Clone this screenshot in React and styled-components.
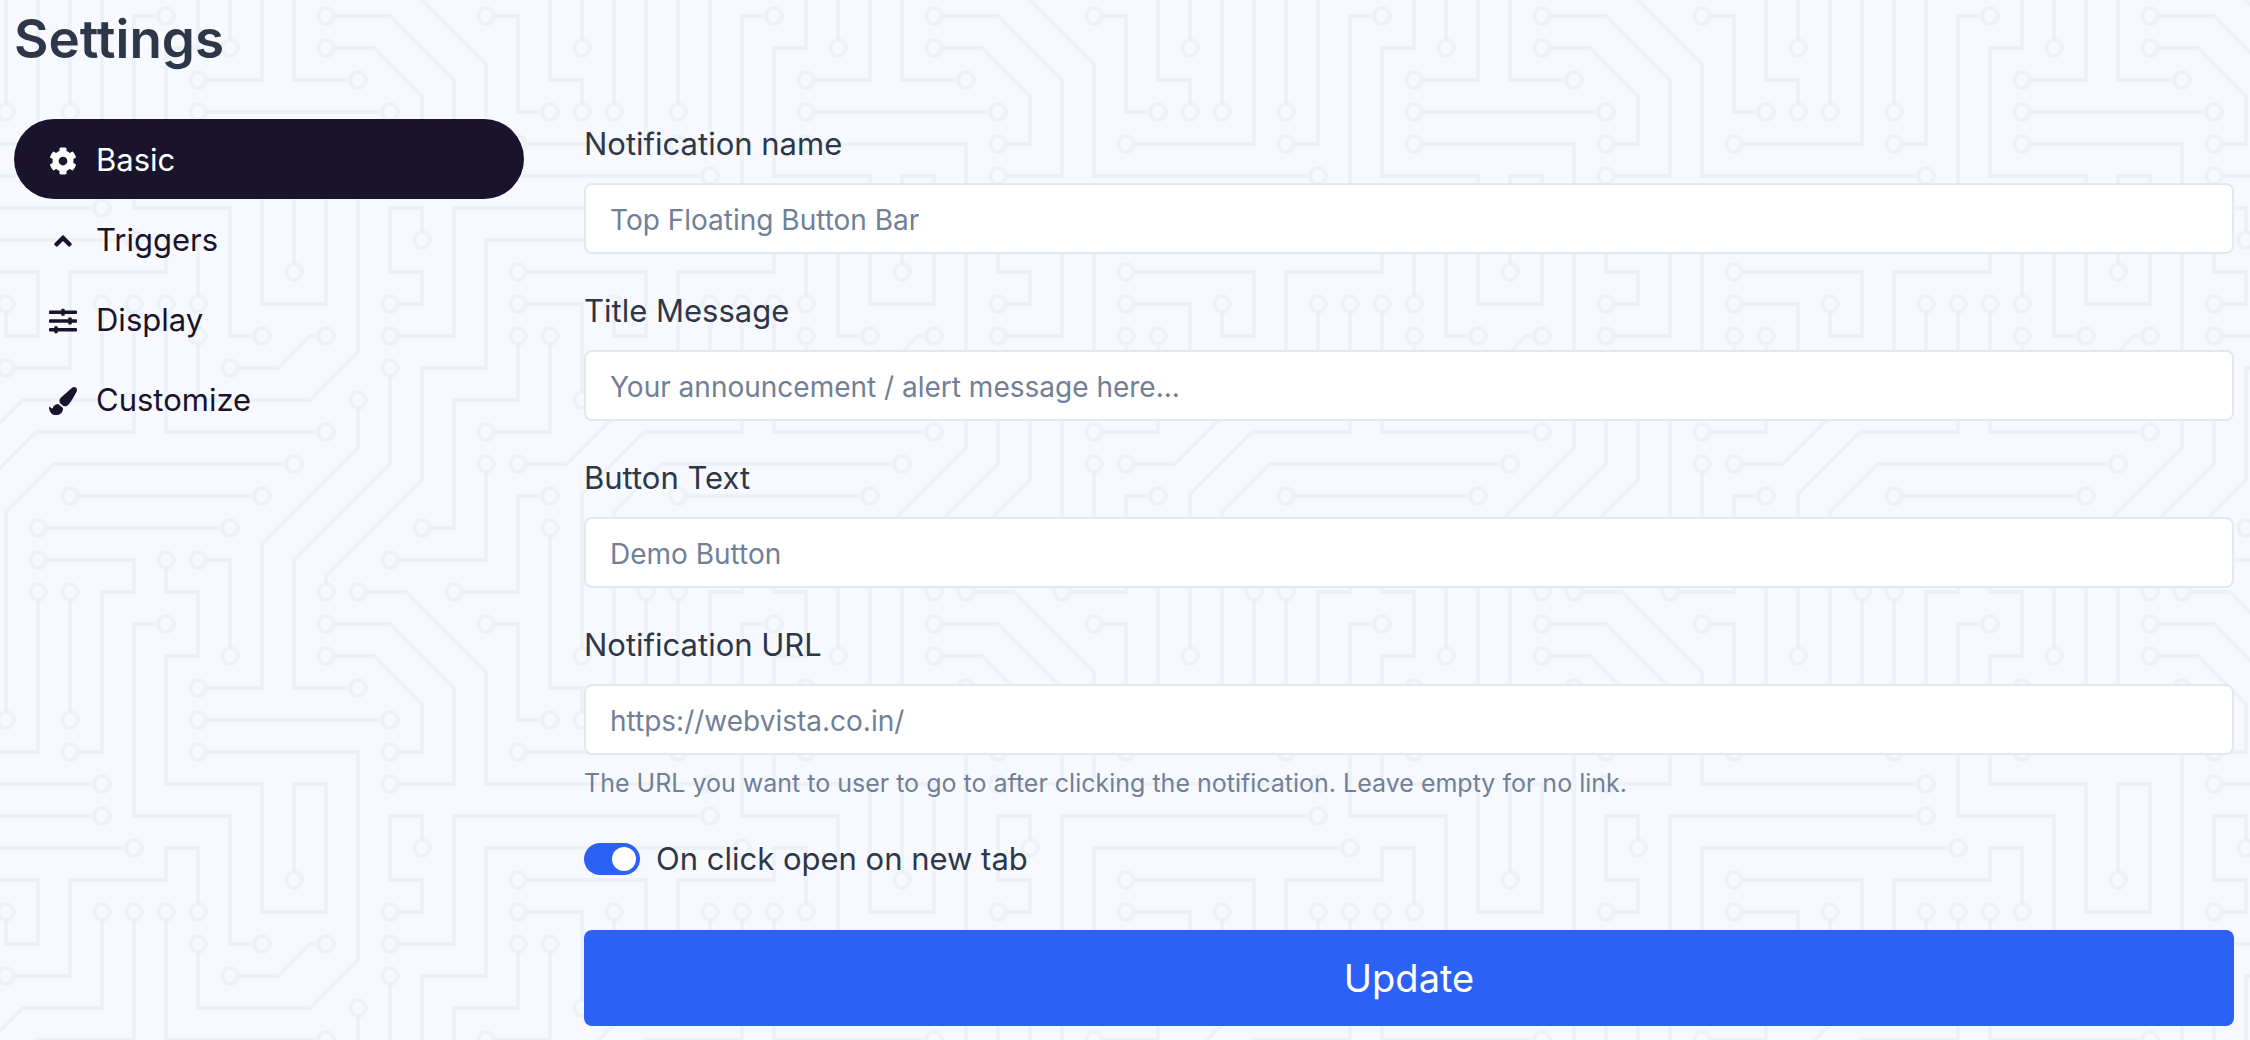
import React, { useState } from 'react';
import {
  FaAngleUp, FaCog, FaPaintBrush, FaSlidersH,
} from 'react-icons/fa';
import styled, { createGlobalStyle } from 'styled-components';

const traces = 'M44.1 224a5 5 0 1 1 0 2H0v-2h44.1zm160 48a5 5 0 1 1 0 2H82v-2h122.1zm57.8-46a5 5 0 1 1 0-2H304v2h-42.1zm0 16a5 5 0 1 1 0-2H304v2h-42.1zm6.2-114a5 5 0 1 1 0 2h-86.2a5 5 0 1 1 0-2h86.2zm-256-48a5 5 0 1 1 0 2H0v-2h12.1zm185.8 34a5 5 0 1 1 0-2h86.2a5 5 0 1 1 0 2h-86.2zM258 12.1a5 5 0 1 1-2 0V0h2v12.1zm-64 208a5 5 0 1 1-2 0v-54.2a5 5 0 1 1 2 0v54.2zm48-198.2V80h62v2h-64V21.9a5 5 0 1 1 2 0zm16 16V64h46v2h-48V37.9a5 5 0 1 1 2 0zm-128 96V208h16v12.1a5 5 0 1 1-2 0V210h-16v-76.1a5 5 0 1 1 2 0zm-5.9-21.9a5 5 0 1 1 0 2H114v48H85.9a5 5 0 1 1 0-2H112v-48h12.1zm-6.2 130a5 5 0 1 1 0-2H176v-74.1a5 5 0 1 1 2 0V242h-60.1zm-16-64a5 5 0 1 1 0-2H114v48h10.1a5 5 0 1 1 0 2H112v-48h-10.1zM66 284.1a5 5 0 1 1-2 0V274H50v30h-2v-32h18v12.1zM236.1 176a5 5 0 1 1 0 2H226v94h48v32h-2v-30h-48v-98h12.1zm25.8-30a5 5 0 1 1 0-2H274v44.1a5 5 0 1 1-2 0V146h-10.1zm-64 96a5 5 0 1 1 0-2H208v-80h16v-14h-42.1a5 5 0 1 1 0-2H226v18h-16v80h-12.1zm86.2-210a5 5 0 1 1 0 2H272V0h2v32h10.1zM98 101.9V146H53.9a5 5 0 1 1 0-2H96v-42.1a5 5 0 1 1 2 0zM53.9 34a5 5 0 1 1 0-2H80V0h2v34H53.9zm60.1 3.9V66H82v64H69.9a5 5 0 1 1 0-2H80V64h32V37.9a5 5 0 1 1 2 0zM101.9 82a5 5 0 1 1 0-2H128V37.9a5 5 0 1 1 2 0V82h-28.1zm16-64a5 5 0 1 1 0-2H146v44.1a5 5 0 1 1-2 0V18h-26.1zm102.2 270a5 5 0 1 1 0 2H98v14h-2v-16h124.1zM242 149.9V160h16v34h-16v62h48v48h-2v-46h-48v-66h16v-30h-16v-12.1a5 5 0 1 1 2 0zM53.9 18a5 5 0 1 1 0-2H64V2H48V0h18v18H53.9zm112 32a5 5 0 1 1 0-2H192V0h50v2h-48v48h-28.1zm-48-48a5 5 0 0 1-9.8-2h2.07a3 3 0 1 0 5.66 0H178v34h-18V21.9a5 5 0 1 1 2 0V32h14V2h-58.1zm0 96a5 5 0 1 1 0-2H137l32-32h39V21.9a5 5 0 1 1 2 0V66h-40.17l-32 32H117.9zm28.1 90.1a5 5 0 1 1-2 0v-76.51L175.59 80H224V21.9a5 5 0 1 1 2 0V82h-49.59L146 112.41v75.69zm16 32a5 5 0 1 1-2 0v-99.51L184.59 96H300.1a5 5 0 0 1 3.9-3.9v2.07a3 3 0 0 0 0 5.66v2.07a5 5 0 0 1-3.9-3.9H185.41L162 121.41v98.69zm-144-64a5 5 0 1 1-2 0v-3.51l48-48V48h32V0h2v50H66v55.41l-48 48v2.69zM50 53.9v43.51l-48 48V208h26.1a5 5 0 1 1 0 2H0v-65.41l48-48V53.9a5 5 0 1 1 2 0zm-16 16V89.41l-34 34v-2.82l32-32V69.9a5 5 0 1 1 2 0zM12.1 32a5 5 0 1 1 0 2H9.41L0 43.41V40.6L8.59 32h3.51zm265.8 18a5 5 0 1 1 0-2h18.69l7.41-7.41v2.82L297.41 50H277.9zm-16 160a5 5 0 1 1 0-2H288v-71.41l16-16v2.82l-14 14V210h-28.1zm-208 32a5 5 0 1 1 0-2H64v-22.59L40.59 194H21.9a5 5 0 1 1 0-2H41.41L66 216.59V242H53.9zm150.2 14a5 5 0 1 1 0 2H96v-56.6L56.6 162H37.9a5 5 0 1 1 0-2h19.5L98 200.6V256h106.1zm-150.2 2a5 5 0 1 1 0-2H80v-46.59L48.59 178H21.9a5 5 0 1 1 0-2H49.41L82 208.59V258H53.9zM34 39.8v1.61L9.41 66H0v-2h8.59L32 40.59V0h2v39.8zM2 300.1a5 5 0 0 1 3.9 3.9H3.83A3 3 0 0 0 0 302.17V256h18v48h-2v-46H2v42.1zM34 241v63h-2v-62H0v-2h34v1zM17 18H0v-2h16V0h2v18h-1zm273-2h14v2h-16V0h2v16zm-32 273v15h-2v-14h-14v14h-2v-16h18v1zM0 92.1A5.02 5.02 0 0 1 6 97a5 5 0 0 1-6 4.9v-2.07a3 3 0 1 0 0-5.66V92.1zM80 272h2v32h-2v-32zm37.9 32h-2.07a3 3 0 0 0-5.66 0h-2.07a5 5 0 0 1 9.8 0zM5.9 0A5.02 5.02 0 0 1 0 5.9V3.83A3 3 0 0 0 3.83 0H5.9zm294.2 0h2.07A3 3 0 0 0 304 3.83V5.9a5 5 0 0 1-3.9-5.9zm3.9 300.1v2.07a3 3 0 0 0-1.83 1.83h-2.07a5 5 0 0 1 3.9-3.9z';

// centres of the round solder pads, punched out of the traces
const pads = [
  [49, 225], [209, 273], [257, 225], [257, 241], [273, 129], [177, 129], [17, 81],
  [193, 113], [289, 113], [257, 17], [193, 225], [193, 161], [241, 17], [257, 33],
  [129, 129], [145, 225], [129, 113], [81, 161], [113, 241], [177, 161], [97, 177],
  [129, 225], [65, 289], [241, 177], [257, 145], [273, 193], [193, 241], [177, 145],
  [289, 33], [97, 97], [49, 145], [49, 33], [113, 33], [65, 129], [97, 81], [129, 33],
  [113, 17], [145, 65], [225, 289], [241, 145], [49, 17], [161, 49], [161, 17],
  [113, 97], [209, 17], [145, 193], [225, 17], [161, 225], [17, 161], [49, 49],
  [33, 209], [33, 65], [17, 33], [273, 49], [257, 209], [49, 241], [17, 193],
  [209, 257], [33, 161], [49, 257], [17, 177],
];

const holes = pads.map(([x, y]) => `M${x} ${y + 3}a3 3 0 1 0 0-6 3 3 0 0 0 0 6z`).join('');

const circuit = encodeURIComponent(
  `<svg xmlns="http://www.w3.org/2000/svg" width="304" height="304" viewBox="0 0 304 304"><path fill="#edf2f7" d="${traces}${holes}"/></svg>`,
);

const links = [
  { name: 'Basic', Icon: FaCog },
  { name: 'Triggers', Icon: FaAngleUp },
  { name: 'Display', Icon: FaSlidersH },
  { name: 'Customize', Icon: FaPaintBrush },
];

const fields = [
  { id: 'name', label: 'Notification name', placeholder: 'Top Floating Button Bar' },
  { id: 'title', label: 'Title Message', placeholder: 'Your announcement / alert message here...' },
  { id: 'button', label: 'Button Text', placeholder: 'Demo Button' },
  {
    id: 'url',
    label: 'Notification URL',
    placeholder: 'https://webvista.co.in/',
    help: 'The URL you want to user to go to after clicking the notification. Leave empty for no link.',
  },
];

const App = () => {
  const [active, setActive] = useState('Basic');
  const [newTab, setNewTab] = useState(true);

  return (
    <Page>
      <GlobalStyle />
      <Title>Settings</Title>
      <Columns>
        <Nav>
          {links.map(({ name, Icon }) => (
            <NavLink
              key={name}
              href={`#${name.toLowerCase()}`}
              $active={active === name}
              onClick={() => setActive(name)}
            >
              <NavIcon><Icon size={28} /></NavIcon>
              {name}
            </NavLink>
          ))}
        </Nav>

        <Form onSubmit={(e) => e.preventDefault()}>
          {fields.map(({
            id, label, placeholder, help,
          }) => (
            <Field key={id}>
              <Label htmlFor={id}>{label}</Label>
              <Input id={id} type="text" placeholder={placeholder} />
              {help ? <Help>{help}</Help> : null}
            </Field>
          ))}
          <SwitchRow>
            <Switch
              id="newtab"
              type="checkbox"
              checked={newTab}
              onChange={() => setNewTab(!newTab)}
            />
            <Label htmlFor="newtab">On click open on new tab</Label>
          </SwitchRow>
          <Submit type="submit">Update</Submit>
        </Form>
      </Columns>
    </Page>
  );
};

export default App;

const GlobalStyle = createGlobalStyle`
  *, *::before, *::after {
    box-sizing: border-box;
  }
  body {
    margin: 0;
    color: #2d3748;
    background: #f7f9fe url("data:image/svg+xml,${circuit}") 292px -338px / 608px 608px;
    font-family: Inter, "Liberation Sans", sans-serif;
    font-size: 31px;
    line-height: 50px;
  }
`;

const Page = styled.main`
  padding: 3px 16px 14px 14px;
`;

const Title = styled.h1`
  margin: 0;
  font-size: 53px;
  line-height: 72px;
  font-weight: 600;
`;

const Columns = styled.div`
  display: grid;
  grid-template-columns: 510px 1fr;
  gap: 60px;
  margin-top: 44px;
`;

const Nav = styled.nav`
  display: flex;
  flex-direction: column;
`;

const NavLink = styled.a`
  display: flex;
  align-items: center;
  gap: 19px;
  height: 80px;
  padding: 2px 35px 0;
  border-radius: 40px;
  color: ${(props) => (props.$active ? '#fff' : '#19132b')};
  background: ${(props) => (props.$active ? '#19132b' : 'transparent')};
  text-decoration: none;
`;

const NavIcon = styled.span`
  display: flex;
  padding-top: 2px;
`;

const Form = styled.form`
  display: flex;
  flex-direction: column;
`;

const Field = styled.div`
  display: flex;
  flex-direction: column;
  margin-bottom: 32px;
`;

const Label = styled.label`
  font-size: 31px;
`;

const Input = styled.input`
  width: 100%;
  height: 71px;
  margin-top: 14px;
  padding: 2px 24px 0;
  border: 2px solid #e2e8f0;
  border-radius: 8px;
  color: #2d3748;
  background: #fff;
  font: inherit;
  font-size: 28px;
  &::placeholder{
    color: #718096;
    opacity: 1;
  }
`;

const Help = styled.small`
  margin-top: 9px;
  color: #718096;
  font-size: 25px;
  line-height: 38px;
`;

const SwitchRow = styled.div`
  display: flex;
  align-items: center;
  gap: 16px;
`;

const Switch = styled.input`
  appearance: none;
  width: 56px;
  height: 32px;
  margin: 0;
  padding: 4px;
  border-radius: 16px;
  background: ${(props) => (props.checked ? '#2c61f6' : '#cbd5e0')};
  cursor: pointer;
  &::before{
    content: '';
    display: block;
    width: 24px;
    height: 24px;
    margin-left: ${(props) => (props.checked ? 'auto' : '0')};
    border-radius: 50%;
    background: #fff;
  }
`;

const Submit = styled.button`
  height: 96px;
  margin-top: 46px;
  border: 0;
  border-radius: 8px;
  color: #fff;
  background: #2c61f6;
  font: inherit;
  font-size: 38px;
  cursor: pointer;
`;
